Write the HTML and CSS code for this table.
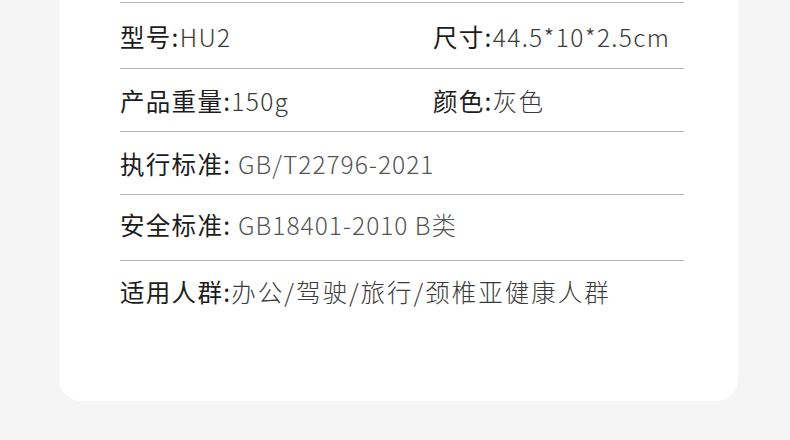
FILE: index.html
```html
<!DOCTYPE html>
<html lang="zh">
<head>
<meta charset="utf-8">
<link rel="stylesheet" href="styles.css">
</head>
<body>
<div class="card">
  <div class="row r1">
    <div class="cell"><span class="k">型号:</span><span class="v">HU2</span></div>
    <div class="cell"><span class="k">尺寸:</span><span class="v">44.5*10*2.5cm</span></div>
  </div>
  <div class="row r2">
    <div class="cell"><span class="k">产品重量:</span><span class="v">150g</span></div>
    <div class="cell"><span class="k">颜色:</span><span class="v">灰色</span></div>
  </div>
  <div class="row r3">
    <div class="cell"><span class="k">执行标准: </span><span class="v">GB/T22796-2021</span></div>
  </div>
  <div class="row r4">
    <div class="cell"><span class="k">安全标准: </span><span class="v">GB18401-2010 B类</span></div>
  </div>
  <div class="row r5 last">
    <div class="cell"><span class="k">适用人群:</span><span class="v">办公/驾驶/旅行/颈椎亚健康人群</span></div>
  </div>
</div>
</body>
</html>
```
FILE: styles.css
```css
html, body { margin: 0; padding: 0; }
body {
  background: #f5f5f5;
  width: 790px;
  height: 440px;
  overflow: hidden;
  font-family: "Noto Sans CJK SC", "Noto Sans", sans-serif;
}
.card {
  background: #fff;
  margin: -30px 0 0 59px;
  width: 679px;
  padding: 32px 0 0 61px;
  box-sizing: border-box;
  border-radius: 0 0 22px 22px;
  height: 431px;
}
.row {
  width: 564px;
  border-top: 1px solid #b4b4b4;
  display: flex;
  align-items: center;
  box-sizing: border-box;
  font-size: 24.5px;
  letter-spacing: 1.3px;
  line-height: 32px;
  white-space: pre;
}
.r1 { height: 66px; padding-top: 2px; }
.r2 { height: 63px; padding-top: 2px; }
.r3 { height: 63px; padding-top: 2px; }
.r4 { height: 66px; padding-bottom: 5px; }
.r5 { height: 80px; align-items: flex-start; padding-top: 15px; }
.cell { width: 313px; flex: none; }
.row.r3 .cell, .row.r4 .cell, .row.r5 .cell { width: auto; }
.k { color: #1c1c1c; font-weight: 400; }
.v { color: #3a3a3a; font-weight: 300; }
.r1 .v { letter-spacing: 1.35px; }
.r3 .v, .r4 .v { color: #555; letter-spacing: 1px; }
.r5 .v { letter-spacing: 2px; }
```
